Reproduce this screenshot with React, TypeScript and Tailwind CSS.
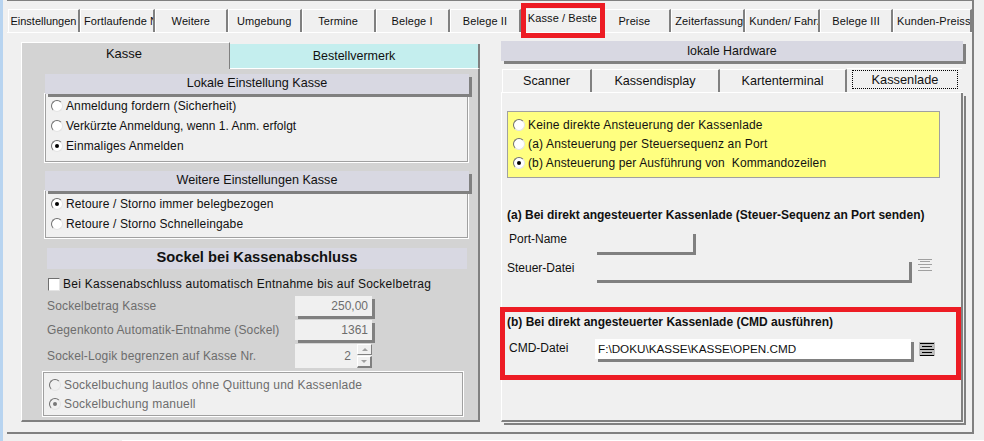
import type { ReactNode } from 'react'

const topTabs = [
  { label: 'Einstellungen', w: 'w-[72px]', extra: 'justify-center text-[10.7px] tracking-normal' },
  { label: 'Fortlaufende N', w: 'w-[75px]', extra: 'justify-start pl-[3px] tracking-[0.1px]' },
  { label: 'Weitere', w: 'w-[73px]', extra: 'justify-center tracking-[0.1px]' },
  { label: 'Umgebung', w: 'w-[74px]', extra: 'justify-center tracking-[0.1px]' },
  { label: 'Termine', w: 'w-[74px]', extra: 'justify-center tracking-[0.1px]' },
  { label: 'Belege I', w: 'w-[74px]', extra: 'justify-center tracking-[0.1px]' },
  { label: 'Belege II', w: 'w-[72px]', extra: 'justify-center tracking-[0.1px]' },
  { label: 'Kasse / Beste', w: 'w-[81px]', active: true, extra: 'justify-center tracking-[0.1px]' },
  { label: 'Preise', w: 'w-[69px]', extra: 'justify-center border-l-0 pr-[3px] tracking-[0.1px]' },
  { label: 'Zeiterfassung', w: 'w-[74px]', extra: 'justify-start pl-[3px] tracking-[0.1px]' },
  { label: 'Kunden/ Fahrz', w: 'w-[75px]', extra: 'justify-start pl-[3px] tracking-[0.1px]' },
  { label: 'Belege III', w: 'w-[73px]', extra: 'justify-center tracking-[0.1px]' },
  { label: 'Kunden-Preisst', w: 'w-[79px]', extra: 'justify-start pl-[3px] tracking-[0.1px]' },
]

function Radio({ checked, disabled }: { checked?: boolean; disabled?: boolean }) {
  return (
    <span
      className={`flex h-[12px] w-[12px] shrink-0 items-center justify-center rounded-full border border-t-[#6f6f6f] border-l-[#6f6f6f] border-r-[#e4e4e4] border-b-[#e4e4e4] ${disabled ? 'bg-[#f0f0f0]' : 'bg-white'}`}
    >
      {checked && <span className={`h-[4px] w-[4px] rounded-full ${disabled ? 'bg-[#777777]' : 'bg-black'}`} />}
    </span>
  )
}

function RadioRow({ label, checked, disabled, h = 'h-[20px]', track = 'tracking-[0.12px]' }: { label: string; checked?: boolean; disabled?: boolean; h?: string; track?: string }) {
  return (
    <div className={`flex items-center gap-[3px] ${h} ${disabled ? 'text-[#6d6d6d]' : 'text-[#111111]'}`}>
      <Radio checked={checked} disabled={disabled} />
      <span className={`whitespace-pre ${track}`}>{label}</span>
    </div>
  )
}

function SectionHeader({ children }: { children: ReactNode }) {
  return (
    <div className="relative z-10 flex h-[20px] w-[424px] items-center justify-center bg-[#d8d8e2] pb-[1px] text-[12.6px] text-[#111111] shadow-[3px_3px_0_#808080]">
      {children}
    </div>
  )
}

function RowBox({ children }: { children: ReactNode }) {
  return (
    <div className="w-[423px] border border-t-0 border-[#a0a0a0] bg-[#f0f0f0] pl-[5px] outline outline-1 outline-white">
      {children}
    </div>
  )
}

function ValueField({ value }: { value: string }) {
  return (
    <div className="flex h-[20px] w-[77px] items-center justify-end bg-[#f0f0f0] pr-[4px] text-[#6d6d6d] shadow-[3px_3px_0_#808080]">
      {value}
    </div>
  )
}

function ListIcon({ active }: { active?: boolean }) {
  const cls = active ? 'bg-black' : 'bg-[#a0a0a0]'
  return (
    <div className={`flex flex-col items-center justify-center gap-[2px] ${active ? 'h-[14px] w-[16px] bg-[#bdbdbd]' : 'h-[12px] w-[15px]'}`}>
      <span className={`h-[1px] w-[14px] ${cls}`} />
      <span className={`h-[1px] w-[10px] ${cls}`} />
      <span className={`h-[1px] w-[14px] ${cls}`} />
      <span className={`h-[1px] w-[10px] ${cls}`} />
      <span className={`h-[1px] w-[14px] ${cls}`} />
    </div>
  )
}

export default function App() {
  return (
    <div className="relative flex h-[441px] w-[984px] overflow-hidden bg-[#f0f0f0] font-['Liberation_Sans',Arial,sans-serif] text-[12px] leading-none">
      <div className="h-full w-[3px] bg-[#b8d4f0]" />
      <div className="w-[4px]" />

      <div className="flex w-[967px] flex-col">
        {/* Main panel */}
        <div className="h-[434px] border-t border-r-2 border-b-2 border-[#808080]">
          {/* Top tabs */}
          <div className="mt-[8px] flex h-[24px] border-b border-white pl-[1px]">
            {topTabs.map(t => (
              <div
                key={t.label}
                className={`flex h-[23px] items-center overflow-hidden whitespace-nowrap border-t border-l border-white text-[11px] text-[#111111] ${t.w} ${t.active ? 'border-r-0 pb-[5px]' : 'border-r-2 border-r-[#808080]'} ${t.extra}`}
              >
                {t.label}
              </div>
            ))}
          </div>

          <div className="mt-[8px] flex gap-[21px] pl-[14px]">
            {/* Left side */}
            <div className="w-[459px]">
              <div className="flex h-[28px] items-end">
                <div className="flex h-[27px] w-[209px] items-center justify-center border-t border-r border-l border-white border-r-[#808080] bg-[#d3d3d3] pr-[3px] pb-[5px] text-[13px] text-[#111111]">
                  Kasse
                </div>
                <div className="flex h-[25px] w-[250px] items-center justify-center border-r-2 border-b border-[#808080] border-b-white bg-[#c4eeee] text-[12.5px] text-[#111111]">
                  Bestellvermerk
                </div>
              </div>
              <div className="h-[353px] border-r-2 border-b-2 border-l border-[#808080] border-l-white bg-[#d3d3d3] pt-[5px] pl-[23px]">
                <SectionHeader>Lokale Einstellung Kasse</SectionHeader>
                <RowBox>
                  <div className="flex flex-col pt-[2px] pb-[5px]">
                    <RadioRow label="Anmeldung fordern (Sicherheit)" />
                    <RadioRow label="Verkürzte Anmeldung, wenn 1. Anm. erfolgt" track="tracking-normal" />
                    <RadioRow label="Einmaliges Anmelden" checked />
                  </div>
                </RowBox>

                <div className="mt-[9px]">
                  <SectionHeader>Weitere Einstellungen Kasse</SectionHeader>
                </div>
                <RowBox>
                  <div className="flex flex-col pt-[3px] pb-[3px]">
                    <RadioRow label="Retoure / Storno immer belegbezogen" checked />
                    <RadioRow label="Retoure / Storno Schnelleingabe" />
                  </div>
                </RowBox>

                <div className="mt-[10px] ml-[2px] flex h-[21px] w-[420px] items-center justify-center bg-[#d8d8e2] pb-[2px] text-[14.7px] font-bold text-[#111111]">
                  Sockel bei Kassenabschluss
                </div>

                <div className="mt-[9px] ml-[3px] flex h-[13px] items-center gap-[3px] text-[#111111]">
                  <span className="h-[13px] w-[12px] border border-t-[#6f6f6f] border-l-[#6f6f6f] border-r-[#e4e4e4] border-b-[#e4e4e4] bg-white" />
                  <span className="pb-[1px] tracking-[0.26px]">Bei Kassenabschluss automatisch Entnahme bis auf Sockelbetrag</span>
                </div>

                <div className="mt-[5px] ml-[2px] flex h-[20px] items-center gap-[5px] text-[#6d6d6d]">
                  <span className="w-[243px] tracking-[0.15px]">Sockelbetrag Kasse</span>
                  <ValueField value="250,00" />
                </div>
                <div className="mt-[4px] ml-[2px] flex h-[20px] items-center gap-[5px] text-[#6d6d6d]">
                  <span className="w-[243px] tracking-[0.13px]">Gegenkonto Automatik-Entnahme (Sockel)</span>
                  <ValueField value="1361" />
                </div>
                <div className="mt-[4px] ml-[2px] flex h-[24px] items-center gap-[5px] text-[#6d6d6d]">
                  <span className="w-[243px] tracking-[0.14px]">Sockel-Logik begrenzen auf Kasse Nr.</span>
                  <div className="flex h-[24px] w-[77px] items-center bg-[#f0f0f0]">
                    <span className="w-[57px] pr-[1px] text-right">2</span>
                    <div className="ml-[5px] flex h-full w-[15px] flex-col gap-[1px]">
                      <div className="flex h-[11px] items-center justify-center border-t border-r border-b border-l border-t-white border-r-[#808080] border-b-[#808080] border-l-white">
                        <span className="h-0 w-0 border-x-[3px] border-b-[3px] border-x-transparent border-b-[#a0a0a0]" />
                      </div>
                      <div className="flex h-[12px] items-center justify-center border-t border-r-2 border-b-2 border-l border-t-white border-r-[#808080] border-b-[#808080] border-l-white">
                        <span className="h-0 w-0 border-x-[3px] border-t-[3px] border-x-transparent border-t-[#a0a0a0]" />
                      </div>
                    </div>
                  </div>
                </div>

                <div className="mt-[4px] -ml-[2px] flex h-[44px] w-[420px] flex-col justify-center border border-[#a0a0a0] bg-[#f0f0f0] pl-[5px] outline outline-1 outline-white">
                  <RadioRow label="Sockelbuchung lautlos ohne Quittung und Kassenlade" disabled h="h-[19px]" track="tracking-[0.2px]" />
                  <RadioRow label="Sockelbuchung manuell" checked disabled h="h-[19px]" track="tracking-[0.2px]" />
                </div>
              </div>
            </div>

            {/* Right side */}
            <div className="w-[462px]">
              <div className="flex h-[20px] items-center justify-center bg-[#d8d8e2] text-[12.4px] text-[#111111] shadow-[3px_3px_0_#808080]">
                lokale Hardware
              </div>
              <div className="mt-[8px] flex h-[24px] border-b border-white pl-[1px]">
                <div className="flex w-[90px] items-center justify-center border-t border-l border-r-2 border-white border-r-[#808080] pt-[1px] text-[12.6px] text-[#111111]">Scanner</div>
                <div className="flex w-[128px] items-center justify-center border-t border-r-2 border-white border-r-[#808080] pt-[1px] text-[12.6px] text-[#111111]">Kassendisplay</div>
                <div className="flex w-[127px] items-center justify-center border-t border-r-2 border-white border-r-[#808080] pt-[1px] text-[12.6px] text-[#111111]">Kartenterminal</div>
                <div className="-mt-[1px] flex h-[25px] w-[115px] items-start border-t border-white pt-[1px] pl-[5px]">
                  <div className="flex h-[19px] w-[106px] items-center justify-center border border-dotted border-black pt-[2px] text-[12.8px] text-[#111111]">Kassenlade</div>
                </div>
              </div>
              <div className="h-[329px] w-[462px] border-r-2 border-b-2 border-l border-[#808080] border-l-white pt-[18px] pl-[5px] shadow-[1px_1px_0_#f0f0f0,3px_3px_0_#808080]">
                <div className="flex h-[67px] w-[433px] flex-col justify-center border border-[#a0a0a0] bg-[#ffff80] pb-[2px] pl-[5px]">
                  <RadioRow label="Keine direkte Ansteuerung der Kassenlade" h="h-[19px]" track="tracking-[0.18px]" />
                  <RadioRow label="(a) Ansteuerung per Steuersequenz an Port" h="h-[19px]" track="tracking-[0.18px]" />
                  <RadioRow label="(b) Ansteuerung per Ausführung von  Kommandozeilen" checked h="h-[19px]" track="tracking-[0.12px]" />
                </div>

                <div className="mt-[31px] h-[12px] font-bold text-[#111111]">(a) Bei direkt angesteuerter Kassenlade (Steuer-Sequenz an Port senden)</div>

                <div className="mt-[10px] flex h-[21px] items-center">
                  <span className="w-[87px] pb-[5px] pl-[2px] text-[#111111]">Port-Name</span>
                  <div className="h-[21px] w-[99px] shadow-[3px_3px_0_#808080]" />
                </div>
                <div className="mt-[7px] flex h-[21px] items-center">
                  <span className="w-[87px] pb-[3px] text-[#111111]">Steuer-Datei</span>
                  <div className="h-[21px] w-[315px] shadow-[3px_3px_0_#808080]" />
                  <div className="mb-[10px] ml-[8px]"><ListIcon /></div>
                </div>
              </div>
            </div>
          </div>
        </div>
        <div className="h-[6px]" />
      </div>

      {/* bottom edge of the window below */}
      <div className="absolute bottom-0 left-[122px] h-[1px] w-[862px] bg-white" />

      {/* Red callouts */}
      <div className="absolute top-[3px] left-[521px] h-[35px] w-[84px] border-[5px] border-[#ed1c24]" />
      <div className="absolute top-[307px] left-[500px] h-[73px] w-[461px] border-[5px] border-[#ed1c24] pt-[4px] pl-[2px]">
        <div className="h-[12px] font-bold text-[#111111]">(b) Bei direkt angesteuerter Kassenlade (CMD ausführen)</div>
        <div className="mt-[11px] flex items-center">
          <span className="w-[88px] pb-[3px] pl-[2px] text-[#111111]">CMD-Datei</span>
          <div className="flex h-[20px] w-[316px] items-center bg-white pb-[1px] pl-[3px] text-[11.7px] text-[#111111] shadow-[3px_3px_0_#808080]">F:\DOKU\KASSE\KASSE\OPEN.CMD</div>
          <div className="ml-[8px]"><ListIcon active /></div>
        </div>
      </div>
    </div>
  )
}
